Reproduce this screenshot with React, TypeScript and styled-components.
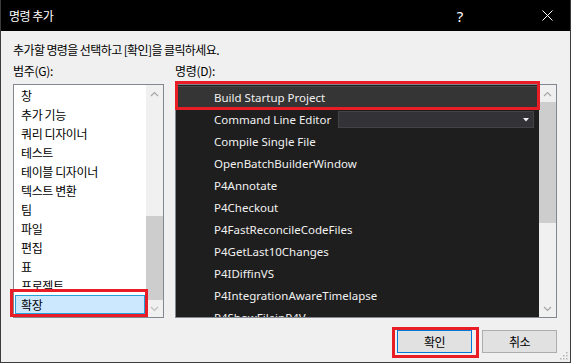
import styled, { createGlobalStyle } from 'styled-components';

const GlobalStyle = createGlobalStyle`
  html, body {
    margin: 0;
    padding: 0;
    overflow: hidden;
    background: #f0f0f0;
  }
`;

const KO = `'Noto Sans CJK KR', 'Noto Sans', sans-serif`;
const UI = `'Noto Sans', 'Noto Sans CJK KR', sans-serif`;

const Dialog = styled.div`
  position: relative;
  width: 571px;
  height: 363px;
  box-sizing: border-box;
  border: 1px solid #3c3c3c;
  border-top: none;
  background: #f0f0f0;
  display: flex;
  flex-direction: column;
  font-family: ${KO};
  font-size: 12px;
  color: #000;
`;

const TitleBar = styled.div`
  height: 31px;
  flex: none;
  background: #000;
  color: #fff;
  display: flex;
  align-items: center;
  padding-left: 8px;
`;

const Title = styled.span`
  flex: 1;
  font-size: 12px;
  letter-spacing: -0.5px;
`;

const CaptionButton = styled.div<{ $gap?: number }>`
  width: 46px;
  height: 31px;
  margin-right: ${(p) => p.$gap ?? 0}px;
  display: flex;
  align-items: center;
  justify-content: center;
  font-family: ${UI};
  font-size: 15px;
`;

const Body = styled.div`
  flex: 1;
  display: flex;
  flex-direction: column;
  padding: 0 13px 0 12px;
`;

const Instruction = styled.div`
  margin-top: 11px;
  line-height: 16px;
  letter-spacing: -0.6px;
`;

const Columns = styled.div`
  margin-top: 5px;
  display: grid;
  grid-template-columns: 151px 1fr;
  column-gap: 11px;
`;

const Label = styled.div`
  line-height: 16px;
  height: 16px;
  letter-spacing: -0.3px;
  margin-bottom: 5px;
`;

const ListBox = styled.div<{ $dark?: boolean }>`
  height: 234px;
  box-sizing: border-box;
  border: 1px solid #828790;
  background: ${(p) => (p.$dark ? '#1e1e1e' : '#fff')};
  display: flex;
  overflow: hidden;
`;

const Items = styled.div`
  flex: 1;
  padding-top: 1px;
  overflow: hidden;
`;

const CategoryItem = styled.div<{ $selected?: boolean }>`
  height: 19px;
  line-height: 18px;
  box-sizing: border-box;
  padding-left: 5px;
  margin: 0 1px;
  letter-spacing: -0.4px;
  border: 1px solid ${(p) => (p.$selected ? '#26a0da' : 'transparent')};
  background: ${(p) => (p.$selected ? '#cce8ff' : 'transparent')};
`;

const CommandItem = styled.div<{ $selected?: boolean }>`
  height: 22px;
  display: flex;
  align-items: center;
  padding-left: 38px;
  font-family: ${UI};
  font-size: 11.5px;
  color: #f1f1f1;
  background: ${(p) => (p.$selected ? '#353535' : 'transparent')};
  border-top: 1px solid ${(p) => (p.$selected ? '#4a4a4a' : 'transparent')};
  box-sizing: border-box;
  white-space: nowrap;
`;

const Combo = styled.div`
  margin-left: auto;
  margin-right: 5px;
  width: 196px;
  height: 17px;
  box-sizing: border-box;
  background: #333337;
  border: 1px solid #434346;
  display: flex;
  align-items: center;
  justify-content: flex-end;
  padding-right: 4px;
`;

const ScrollBar = styled.div`
  width: 17px;
  flex: none;
  background: #f0f0f0;
  display: flex;
  flex-direction: column;
`;

const Arrow = styled.div`
  height: 17px;
  flex: none;
  display: flex;
  align-items: center;
  justify-content: center;
`;

const Track = styled.div<{ $end?: boolean }>`
  flex: 1;
  display: flex;
  flex-direction: column;
  justify-content: ${(p) => (p.$end ? 'flex-end' : 'flex-start')};
`;

const Thumb = styled.div<{ $h: number }>`
  height: ${(p) => p.$h}px;
  background: #cdcdcd;
`;

const Buttons = styled.div`
  margin-top: 12px;
  display: flex;
  justify-content: flex-end;
  gap: 10px;
`;

const Button = styled.div<{ $default?: boolean }>`
  width: 75px;
  height: 23px;
  box-sizing: border-box;
  background: #e1e1e1;
  border: 1px solid ${(p) => (p.$default ? '#0078d7' : '#adadad')};
  display: flex;
  align-items: center;
  justify-content: center;
  letter-spacing: -0.5px;
`;

const Annotation = styled.div<{ $x: number; $y: number; $w: number; $h: number }>`
  position: absolute;
  left: ${(p) => p.$x}px;
  top: ${(p) => p.$y}px;
  width: ${(p) => p.$w}px;
  height: ${(p) => p.$h}px;
  box-sizing: border-box;
  border: 3px solid #e81d25;
  pointer-events: none;
`;

const Grip = styled.svg`
  position: absolute;
  right: 2px;
  bottom: 2px;
`;

const Chevron = ({ up, color }: { up?: boolean; color: string }) => (
  <svg width="9" height="6" viewBox="0 0 9 6">
    <path d={up ? 'M1 5 L4.5 1.5 L8 5' : 'M1 1 L4.5 4.5 L8 1'} fill="none" stroke={color} strokeWidth="1.2" />
  </svg>
);

const categories = ['창', '추가 기능', '쿼리 디자이너', '테스트', '테이블 디자이너', '텍스트 변환', '팀', '파일', '편집', '표', '프로젝트', '확장'];

const commands = [
  'Build Startup Project',
  'Command Line Editor',
  'Compile Single File',
  'OpenBatchBuilderWindow',
  'P4Annotate',
  'P4Checkout',
  'P4FastReconcileCodeFiles',
  'P4GetLast10Changes',
  'P4IDiffinVS',
  'P4IntegrationAwareTimelapse',
  'P4ShowFileinP4V',
];

export default function App() {
  return (
    <Dialog>
      <GlobalStyle />
      <TitleBar>
        <Title>명령 추가</Title>
        <CaptionButton $gap={41}>?</CaptionButton>
        <CaptionButton>
          <svg width="11" height="11" viewBox="0 0 11 11">
            <path d="M0.5 0.5 L10.5 10.5 M10.5 0.5 L0.5 10.5" stroke="#fff" strokeWidth="1" />
          </svg>
        </CaptionButton>
      </TitleBar>
      <Body>
        <Instruction>추가할 명령을 선택하고 [확인]을 클릭하세요.</Instruction>
        <Columns>
          <div>
            <Label>범주(G):</Label>
            <ListBox>
              <Items>
                {categories.map((c) => (
                  <CategoryItem key={c} $selected={c === '확장'}>
                    {c}
                  </CategoryItem>
                ))}
              </Items>
              <ScrollBar>
                <Arrow>
                  <Chevron up color="#a6a6a6" />
                </Arrow>
                <Track $end>
                  <Thumb $h={84} />
                </Track>
                <Arrow>
                  <Chevron color="#bfbfbf" />
                </Arrow>
              </ScrollBar>
            </ListBox>
          </div>
          <div>
            <Label>명령(D):</Label>
            <ListBox $dark>
              <Items>
                {commands.map((c, i) => (
                  <CommandItem key={c} $selected={i === 0}>
                    {c}
                    {i === 1 && (
                      <Combo>
                        <svg width="6" height="4" viewBox="0 0 6 4">
                          <path d="M0 0 H6 L3 3.5 Z" fill="#f1f1f1" />
                        </svg>
                      </Combo>
                    )}
                  </CommandItem>
                ))}
              </Items>
              <ScrollBar>
                <Arrow>
                  <Chevron up color="#a6a6a6" />
                </Arrow>
                <Track>
                  <Thumb $h={121} />
                </Track>
                <Arrow>
                  <Chevron color="#a6a6a6" />
                </Arrow>
              </ScrollBar>
            </ListBox>
          </div>
        </Columns>
        <Buttons>
          <Button $default>확인</Button>
          <Button>취소</Button>
        </Buttons>
      </Body>
      <Annotation $x={9} $y={289} $w={138} $h={28} />
      <Annotation $x={174} $y={81} $w={365} $h={29} />
      <Annotation $x={391} $y={327} $w={87} $h={31} />
      <Grip width="10" height="10" viewBox="0 0 10 10">
        {[
          [8, 2],
          [8, 5],
          [8, 8],
          [5, 5],
          [5, 8],
          [2, 8],
        ].map(([x, y]) => (
          <rect key={`${x}-${y}`} x={x} y={y} width="1.5" height="1.5" fill="#b4b4b4" />
        ))}
      </Grip>
    </Dialog>
  );
}
